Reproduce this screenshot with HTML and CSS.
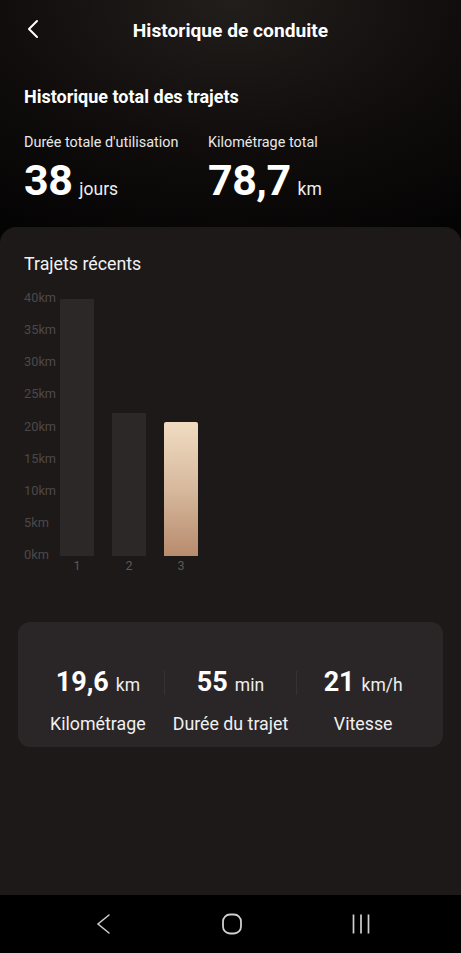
FILE: index.html
```html
<!DOCTYPE html>
<html lang="fr">
<head>
<meta charset="utf-8">
<link rel="stylesheet" href="styles.css">
</head>
<body>
<div class="screen">
  <header class="topbar">
    <svg class="back" width="14" height="20" viewBox="0 0 14 20"><path d="M11 2 L3 10 L11 18" fill="none" stroke="#fff" stroke-width="2" stroke-linecap="round" stroke-linejoin="round"/></svg>
    <h1 class="title">Historique de conduite</h1>
  </header>
  <section class="totals">
    <h2 class="totals-title">Historique total des trajets</h2>
    <div class="totals-row">
      <div class="total">
        <div class="total-label">Durée totale d'utilisation</div>
        <div class="total-value"><span class="big">38</span><span class="unit">jours</span></div>
      </div>
      <div class="total total-km">
        <div class="total-label">Kilométrage total</div>
        <div class="total-value"><span class="big">78,7</span><span class="unit">km</span></div>
      </div>
    </div>
  </section>
  <main class="card">
    <h3 class="card-title">Trajets récents</h3>
    <div class="chart">
      <div class="yaxis">
        <span>40km</span><span>35km</span><span>30km</span><span>25km</span><span>20km</span><span>15km</span><span>10km</span><span>5km</span><span>0km</span>
      </div>
      <div class="bars">
        <div class="bar-col"><div class="bar" style="height:257px"></div><span class="xl">1</span></div>
        <div class="bar-col"><div class="bar" style="height:143px"></div><span class="xl">2</span></div>
        <div class="bar-col"><div class="bar active" style="height:134px"></div><span class="xl">3</span></div>
      </div>
    </div>
    <div class="stats">
      <div class="stat">
        <div class="stat-value"><b>19,6</b><span>km</span></div>
        <div class="stat-label">Kilométrage</div>
      </div>
      <div class="divider"></div>
      <div class="stat">
        <div class="stat-value"><b>55</b><span>min</span></div>
        <div class="stat-label">Durée du trajet</div>
      </div>
      <div class="divider"></div>
      <div class="stat">
        <div class="stat-value"><b>21</b><span>km/h</span></div>
        <div class="stat-label">Vitesse</div>
      </div>
    </div>
  </main>
  <nav class="navbar">
    <svg width="20" height="22" viewBox="0 0 20 22"><path d="M16 2 L5 11 L16 20" fill="none" stroke="#cfcfcf" stroke-width="1.5" stroke-linecap="round"/></svg>
    <svg width="20" height="22" viewBox="0 0 20 22"><rect x="1" y="1.5" width="18" height="19" rx="7" fill="none" stroke="#cfcfcf" stroke-width="1.8"/></svg>
    <svg width="20" height="22" viewBox="0 0 20 22"><path d="M2.5 1.5 V20.5 M10 1.5 V20.5 M17.5 1.5 V20.5" stroke="#cfcfcf" stroke-width="1.7"/></svg>
  </nav>
</div>
</body>
</html>
```
FILE: styles.css
```css
* { box-sizing: border-box; margin: 0; padding: 0; }
html, body { width: 461px; height: 953px; background: #000; }
body { font-family: Roboto, "Noto Sans", sans-serif; color: #fff; overflow: hidden; }
.screen {
  height: 953px;
  display: flex;
  flex-direction: column;
  background: radial-gradient(ellipse 420px 260px at 50% 0%, #221e1c 0%, #100d0c 55%, #050404 100%);
}
.topbar {
  height: 60px;
  display: flex;
  align-items: center;
  justify-content: center;
  position: relative;
}
.back { position: absolute; left: 26px; top: 19px; }
.title { font-size: 19.2px; font-weight: 700; letter-spacing: 0; }
.totals { padding: 26px 24px 0; height: 167px; }
.totals-title { font-size: 18px; font-weight: 700; line-height: 22px; }
.totals-row { display: flex; margin-top: 26px; }
.total { width: 184px; }
.total-label { font-size: 14.4px; color: #e8e8e8; line-height: 17px; }
.total-value { display: flex; align-items: baseline; margin-top: 5px; }
.big { font-size: 43px; font-weight: 700; line-height: 48px; letter-spacing: -0.5px; }
.unit { font-size: 17.5px; margin-left: 7px; color: #eee; }
.card {
  flex: 1;
  background: #1c1918;
  border-radius: 16px 16px 0 0;
  padding: 27px 18px 0;
}
.card-title { font-size: 17.8px; font-weight: 400; line-height: 20px; padding-left: 6px; color: #f2f2f2; }
.chart { display: flex; margin-top: 17px; height: 270px; }
.yaxis {
  width: 42px;
  padding-left: 6px;
  display: flex;
  flex-direction: column;
  justify-content: space-between;
  height: 271px;
  font-size: 12.8px;
  color: #4d4848;
  line-height: 14px;
}
.bars { display: flex; gap: 18px; height: 270px; align-items: flex-end; }
.bar-col { width: 34px; height: 270px; display: flex; flex-direction: column; justify-content: flex-end; align-items: center; position: relative; }
.bar { width: 34px; background: #2c2828; margin-bottom: 5px; }
.bar.active { background: linear-gradient(180deg, #f0dcc2 0%, #d7b99d 50%, #b88b6d 100%); border-radius: 2px 2px 0 0; }
.xl { position: absolute; bottom: -12px; font-size: 12.5px; line-height: 14px; color: #5c5757; }
.stats {
  margin-top: 61px;
  height: 125px;
  background: #2a2627;
  border-radius: 12px;
  display: grid;
  grid-template-columns: 1fr 1px 1fr 1px 1fr;
  align-items: start;
  padding: 44px 14px 0;
}
.stat { text-align: center; }
.stat-value { display: flex; justify-content: center; align-items: baseline; gap: 7px; }
.stat-value b { font-size: 27px; font-weight: 700; line-height: 32px; }
.stat-value span { font-size: 17.5px; color: #eee; }
.stat-label { font-size: 17.8px; line-height: 20px; margin-top: 16px; color: #f0f0f0; }
.divider { width: 1px; height: 24px; background: #363132; margin-top: 5px; }
.navbar {
  height: 58px;
  background: #000;
  display: flex;
  align-items: center;
  justify-content: center;
  gap: 109px;
  padding-left: 3px;
}
.navbar svg { display: block; }
```
